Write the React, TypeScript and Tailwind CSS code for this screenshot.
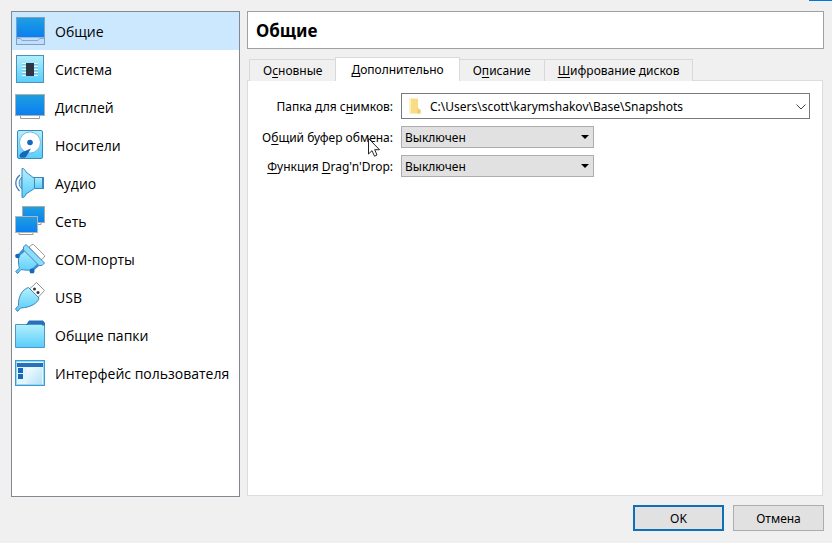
import { useState, type ReactNode } from "react";

const stroke = "#3f86bd";

function Gradients() {
  return (
    <svg width="0" height="0" className="absolute" aria-hidden="true">
      <defs>
        <linearGradient id="screen" x1="0" y1="0" x2="0" y2="1">
          <stop offset="0" stopColor="#1f9fe0" />
          <stop offset="1" stopColor="#0a7ff2" />
        </linearGradient>
        <linearGradient id="aqua" x1="0" y1="0" x2="0" y2="1">
          <stop offset="0" stopColor="#b4effc" />
          <stop offset="1" stopColor="#57cdfb" />
        </linearGradient>
        <linearGradient id="pane" x1="0" y1="0" x2="1" y2="1">
          <stop offset="0" stopColor="#f4fcff" />
          <stop offset="1" stopColor="#b5e2f8" />
        </linearGradient>
      </defs>
    </svg>
  );
}

function Icon({ children }: { children: ReactNode }) {
  return (
    <svg width="30" height="30" viewBox="0 0 30 30" className="shrink-0" aria-hidden="true">
      {children}
    </svg>
  );
}

const icons = {
  general: (
    <Icon>
      <rect x="1.5" y="1.5" width="28" height="27" fill="#c3defa" stroke="#7f9fc4" />
      <rect x="2" y="2" width="27" height="19" fill="url(#screen)" />
      <path d="M2 22.5H5.5L7 24.5H23L24.5 22.5H29" fill="none" stroke="#86a8d2" />
      <path d="M2 21.5H29" stroke="#a5b6c8" />
    </Icon>
  ),
  system: (
    <Icon>
      <rect x="1.5" y="1.5" width="27" height="27" fill="url(#aqua)" stroke="#4b92b8" />
      <path d="M7 9.5H23M7 12.5H23M7 15.5H23M7 18.5H23M7 21.5H23" stroke="#e5f8fc" />
      <path d="M7 10.5H23M7 13.5H23M7 16.5H23M7 19.5H23" stroke="#74b2c8" strokeOpacity=".6" />
      <rect x="11" y="9" width="8" height="13" fill="#2d3543" />
    </Icon>
  ),
  display: (
    <Icon>
      <path d="M5.5 23V26.5H24.5V23" fill="#fff" stroke="#9a9a9a" />
      <rect x=".5" y="2.5" width="29" height="21" fill="url(#screen)" stroke="#b0aeac" />
    </Icon>
  ),
  storage: (
    <Icon>
      <rect x="2.5" y=".5" width="25" height="28" rx="1.5" fill="url(#aqua)" stroke={stroke} />
      <circle cx="15" cy="12.5" r="10.5" fill="#fff" stroke="#63afd7" strokeWidth=".8" />
      <circle cx="15" cy="12.5" r="2.8" fill="#1767bd" />
      <path d="M16 18.5L11 27C8.5 28.5 4.500 28 4.500 26C4.5 23.5 7 22 10 21Z" fill="#1767bd" />
    </Icon>
  ),
  audio: (
    <Icon>
      <path d="M5 7C-.5 11.5-.5 18 4.5 23" fill="none" stroke="#3e78b8" strokeWidth="1.3" />
      <path d="M7 9C3.2 12 3.2 18 7 21Z" fill="#a5e2f7" stroke={stroke} />
      <rect x="18.5" y="9.5" width="10" height="11" fill="url(#aqua)" stroke={stroke} />
      <path d="M7 .5C9.5 .5 10 2 11 4L19.5 10.5V20.5L11 26C10 28.5 9.5 29.5 7 29.5Z" fill="url(#aqua)" stroke={stroke} />
      <path d="M27.5 10V20" stroke={stroke} />
    </Icon>
  ),
  network: (
    <Icon>
      <path d="M12 17V18.5H26V17" fill="#fff" stroke="#999" />
      <rect x="7.5" y=".5" width="22" height="16" fill="url(#screen)" stroke="#aaa" />
      <path d="M4 26V28.5H18V26" fill="#fff" stroke="#999" />
      <rect x=".5" y="10.5" width="22" height="16" fill="url(#screen)" stroke="#b5b5b5" />
    </Icon>
  ),
  serial: (
    <Icon>
      <path d="M14 3L17 .5H18.5L29.5 11.5V13L26 16Z" fill="#fff" stroke="#9b9b9b" />
      <path d="M9 4C5 8 3 12 3.500 18C3.700 21 4 23 4.500 24L.7 27.500L2.500 29.500L6 25.500C12 26.500 15 26.500 18 25C21 23.500 23.500 22 25.500 20Z" fill="url(#aqua)" stroke={stroke} />
      <path d="M2.500 12L9 6.500M17 26.500L23.500 20.500" stroke="#3b8fd0" strokeWidth="2.500" />
      <path d="M8.500 3L11 .500L29.500 19L27 21.500H24L8.500 6Z" fill="#8bddfa" stroke={stroke} />
      <circle cx="2.500" cy="12" r="2.300" fill="#1767bd" />
      <circle cx="17" cy="27" r="2.500" fill="#1767bd" />
    </Icon>
  ),
  usb: (
    <Icon>
      <path d="M14.500 7L21.500 .5L29.500 8.500L23 15.500Z" fill="#fff" stroke="#919191" />
      <circle cx="19.500" cy="7" r="1.500" fill="#333" />
      <circle cx="23" cy="10.500" r="1.500" fill="#333" />
      <path d="M13.500 5.500L24 16C23 21 16 25.500 5.500 26L2.500 29.500L.5 27L3.500 23.500C3 15 7 7.500 13.500 5.500Z" fill="url(#aqua)" stroke={stroke} />
    </Icon>
  ),
  folder: (
    <Icon>
      <path d="M.5 4.5H29.5V27.5H.5Z" fill="url(#aqua)" stroke="#4b9ac5" />
      <path d="M11 5L14 .5H28L30 3V5.5H27.5L26 4H14L12.5 5Z" fill="#2870bd" />
    </Icon>
  ),
  ui: (
    <Icon>
      <rect x=".5" y="2.5" width="29" height="25" fill="#e2f5fc" stroke="#4298cb" />
      <rect x="1.5" y="3.5" width="27" height="23" fill="none" stroke="#8fdcf8" />
      <rect x="2" y="5" width="26" height="4" fill="#2870bd" />
      <rect x="3" y="10" width="5" height="5" fill="#1767bd" />
      <rect x="3" y="16" width="5" height="5" fill="#1767bd" />
      <rect x="12" y="10" width="15" height="16" fill="url(#pane)" />
    </Icon>
  ),
};

const sections = [
  { label: "Общие", icon: icons.general },
  { label: "Система", icon: icons.system },
  { label: "Дисплей", icon: icons.display },
  { label: "Носители", icon: icons.storage },
  { label: "Аудио", icon: icons.audio },
  { label: "Сеть", icon: icons.network },
  { label: "COM-порты", icon: icons.serial },
  { label: "USB", icon: icons.usb },
  { label: "Общие папки", icon: icons.folder },
  { label: "Интерфейс пользователя", icon: icons.ui },
];

const tabs = [
  { id: "basic", label: <>О<Key>с</Key>новные</> },
  { id: "advanced", label: <><Key>Д</Key>ополнительно</> },
  { id: "description", label: <>О<Key>п</Key>исание</> },
  { id: "encryption", label: <><Key>Ш</Key>ифрование дисков</> },
];

function Key({ children }: { children: ReactNode }) {
  return <span className="underline underline-offset-2">{children}</span>;
}

function ModeSelect({ id, options }: { id: string; options: string[] }) {
  return (
    <div className="relative w-[193px]">
      <select id={id} className="block h-[22px] w-full appearance-none border border-[#adadad] bg-[#e1e1e1] pl-[3px] pr-6 pt-px outline-none">
        {options.map((o) => <option key={o}>{o}</option>)}
      </select>
      <svg width="8" height="4" viewBox="0 0 8 4" className="pointer-events-none absolute right-[5px] top-[9px]" aria-hidden="true">
        <path d="M0 0H8L4 4Z" fill="#000" />
      </svg>
    </div>
  );
}

export default function App() {
  const [section, setSection] = useState("Общие");
  const [tab, setTab] = useState("advanced");
  const modes = ["Выключен", "Из гостевой в основную", "Из основной в гостевую", "Двунаправленный"];

  return (
    <div className="relative flex h-screen flex-col bg-[#f0f0f0] px-2 pb-3 pt-[11px] font-['Noto_Sans',sans-serif] text-[12px] leading-4 text-black">
      <Gradients />
      <div className="absolute right-0 top-0 h-px w-[23px] bg-[#0078d7]" />

      <div className="flex min-h-0 flex-1 gap-[7px] pl-[3px]">
        <nav className="mb-[-1px] w-[229px] shrink-0 border border-[#828790] bg-white font-['Open_Sans',sans-serif] text-[14px]">
          {sections.map(({ label, icon }) => (
            <button
              key={label}
              onClick={() => setSection(label)}
              className={`flex h-[38px] w-full items-center gap-[10px] pl-[3px] text-left whitespace-nowrap ${label === section ? "bg-[#cce8ff]" : ""}`}
            >
              {icon}
              <span className="pt-0.5">{label}</span>
            </button>
          ))}
        </nav>

        <main className="flex min-w-0 flex-1 flex-col">
          <h1 className="flex h-[38px] shrink-0 items-center border border-[#a0a0a0] bg-white px-2 pt-px text-[17px] font-bold">{section}</h1>

          <div role="tablist" className="relative mt-2 flex h-6 shrink-0 items-end pl-0.5">
            {tabs.map(({ id, label }) => (
              <button
                key={id}
                id={`tab-${id}`}
                role="tab"
                aria-selected={id === tab}
                onClick={() => setTab(id)}
                className={
                  id === tab
                    ? "-mr-px h-6 border border-b-0 border-[#d9d9d9] bg-white px-[15px]"
                    : "-mr-px h-[22px] border border-b-0 border-[#d9d9d9] bg-[#f0f0f0] px-[13px]"
                }
              >
                {label}
              </button>
            ))}
          </div>

          <section role="tabpanel" aria-labelledby={`tab-${tab}`} className="-mt-px mr-px flex-1 border border-[#dcdcdc] bg-white px-3 pt-3">
            <div className="grid grid-cols-[minmax(133px,auto)_1fr] items-center gap-x-2 gap-y-[7px]">
              <label htmlFor="snapshots" className="pt-px text-right">Папка для с<Key>н</Key>имков:</label>
              <div className="relative">
                <select id="snapshots" className="block h-[26px] w-full appearance-none border border-[#7a7a7a] bg-white pl-7 pr-6 pt-px outline-none">
                  <option>C:\Users\scott\karymshakov\Base\Snapshots</option>
                  <option>Другой...</option>
                </select>
                <svg width="12" height="16" viewBox="0 0 12 16" className="pointer-events-none absolute left-2 top-[5px]" aria-hidden="true">
                  <path d="M0 .5H9V11L11.5 12V15.5H0Z" fill="#fbdc86" />
                  <path d="M0 .5H2V15.5H0Z" fill="#fff0bd" />
                  <path d="M9 10L11.5 12V15.5H8Z" fill="#f0cb70" />
                </svg>
                <svg width="10" height="6" viewBox="0 0 10 6" className="pointer-events-none absolute right-1 top-[11px]" aria-hidden="true">
                  <path d="M.5 .5L5 5L9.5 .5" fill="none" stroke="#444" />
                </svg>
              </div>

              <label htmlFor="clipboard" className="pt-px text-right">О<Key>б</Key>щий буфер обмена:</label>
              <ModeSelect id="clipboard" options={modes} />

              <label htmlFor="dnd" className="pt-px text-right"><Key>Ф</Key>ункция <Key>D</Key>rag'n'Drop:</label>
              <ModeSelect id="dnd" options={modes} />
            </div>
          </section>
        </main>
      </div>

      <footer className="mt-[9px] flex shrink-0 justify-end gap-[9px]">
        <button className="h-[26px] w-[91px] border-2 border-[#0f70b8] bg-[#e1e1e1] pt-px">OK</button>
        <button className="h-[26px] w-[91px] border border-[#adadad] bg-[#e1e1e1] pt-px">Отмена</button>
      </footer>

      <svg width="13" height="19" viewBox="0 0 13 19" className="pointer-events-none absolute left-[368px] top-[138px]" aria-hidden="true">
        <path d="M.5 .5V16L4 12.7L6.5 18.2L9 17L6.7 11.7H11.5Z" fill="#fff" stroke="#222" />
      </svg>
    </div>
  );
}
